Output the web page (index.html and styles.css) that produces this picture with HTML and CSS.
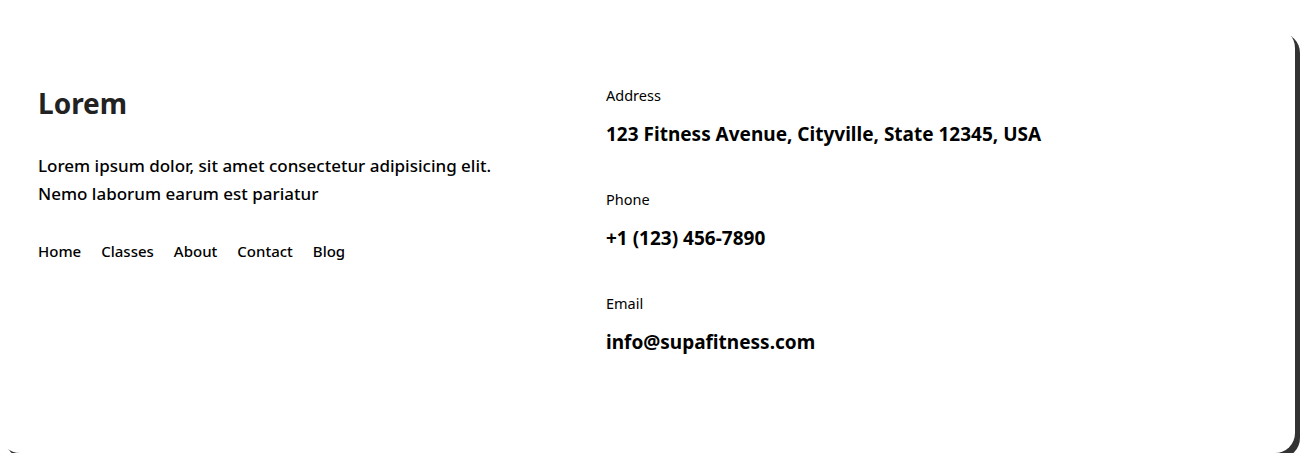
FILE: index.html
```html
<!DOCTYPE html>
<html lang="en">
<head>
<meta charset="utf-8">
<title>Footer</title>
<link rel="stylesheet" href="styles.css">
</head>
<body>
<footer class="card">
  <div class="brand">
    <h2 class="brand-title">Lorem</h2>
    <p class="brand-text">Lorem ipsum dolor, sit amet consectetur adipisicing elit. Nemo laborum earum est pariatur</p>
    <nav class="nav">
      <a href="#">Home</a>
      <a href="#">Classes</a>
      <a href="#">About</a>
      <a href="#">Contact</a>
      <a href="#">Blog</a>
    </nav>
  </div>
  <div class="contact">
    <div class="item">
      <div class="label">Address</div>
      <div class="value">123 Fitness Avenue, Cityville, State 12345, USA</div>
    </div>
    <div class="item">
      <div class="label">Phone</div>
      <div class="value">+1 (123) 456-7890</div>
    </div>
    <div class="item">
      <div class="label">Email</div>
      <div class="value">info@supafitness.com</div>
    </div>
  </div>
</footer>
</body>
</html>
```
FILE: styles.css
```css
html, body {
  margin: 0;
  padding: 0;
  background: #fff;
}
body {
  font-family: "Noto Sans", "Open Sans", sans-serif;
  color: #000;
  padding-top: 28px;
}
.card {
  box-sizing: border-box;
  width: 1295px;
  height: 425px;
  background: #fff;
  border-radius: 20px;
  box-shadow: 5px 5px 0 #333;
  display: grid;
  grid-template-columns: 568px 1fr;
  padding: 56px 38px 0 38px;
}
.brand-title {
  margin: 0;
  font-size: 28px;
  font-weight: 700;
  line-height: 38px;
  color: #222;
}
.brand-text {
  margin: 30px 0 0;
  font-size: 17px;
  font-weight: 500;
  line-height: 28px;
  width: 500px;
}
.nav {
  display: flex;
  gap: 20px;
  margin-top: 33px;
}
.nav a {
  color: #000;
  text-decoration: none;
  font-size: 15px;
  font-weight: 500;
  line-height: 20px;
}
.contact {
  display: flex;
  flex-direction: column;
  gap: 42px;
  padding-top: 1px;
}
.item {
  display: flex;
  flex-direction: column;
  gap: 16px;
}
.label {
  font-size: 14.5px;
  line-height: 20px;
}
.value {
  font-size: 19px;
  font-weight: 700;
  line-height: 26px;
}
```
